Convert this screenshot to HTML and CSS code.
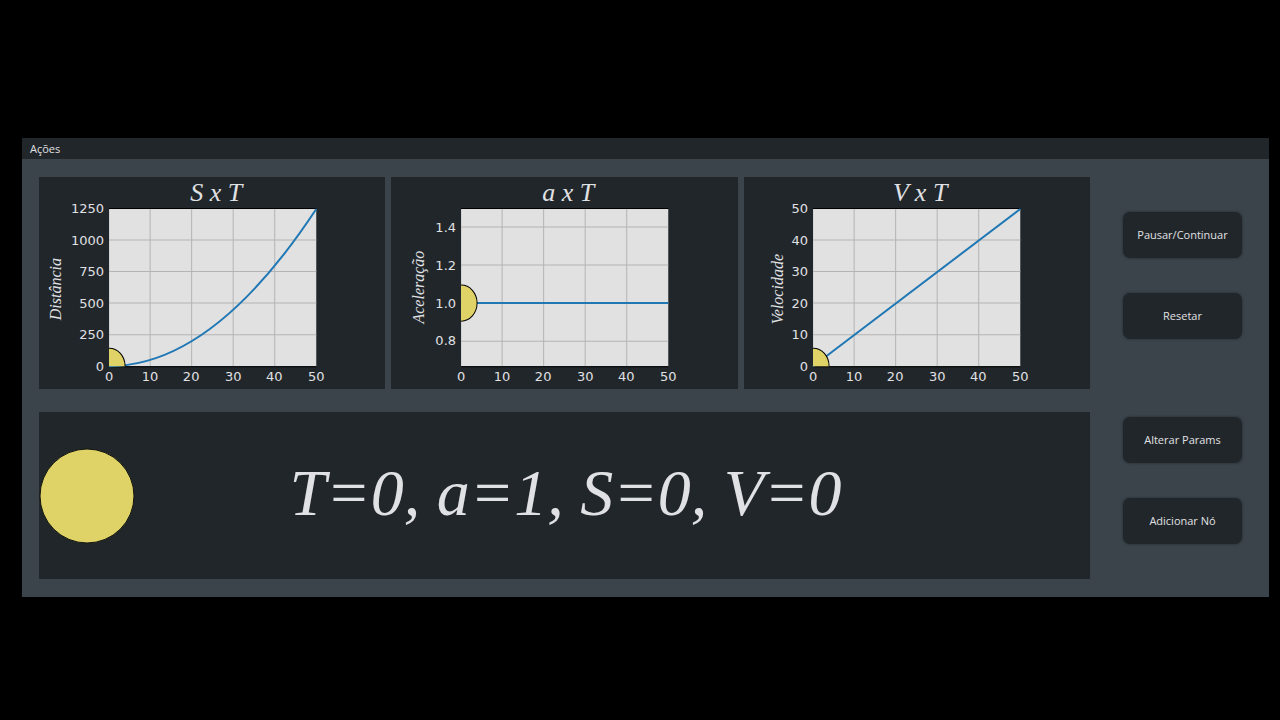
FILE: index.html
```html
<!DOCTYPE html>
<html lang="pt-BR">
<head>
<meta charset="utf-8">
<meta name="viewport" content="width=device-width, initial-scale=1">
<title>Ações</title>
<link rel="stylesheet" href="styles.css">
</head>
<body>
<div class="window">
  <nav class="menubar"><button class="menu" type="button">Ações</button></nav>
  <div class="content">
    <main class="panels">
      <section class="charts">
        <svg class="chart" viewBox="0 0 346 212" role="img" aria-label="S x T">
          <text class="chart-title" x="177" y="24">S x T</text>
          <text class="axis-title" transform="translate(22 112) rotate(-90)">Distância</text>
          <rect class="plot" x="70" y="32" width="207" height="157"/>
          <path class="grid" d="M111 32V189M152.500 32V189M194 32V189M235.500 32V189M70 63H277M70 94.500H277M70 126H277M70 157.500H277"/>
          <path class="frame" d="M70 31.500H277M70 189.500H277"/>
          <path class="line" d="M70 189Q173.500 189 277 32"/>
          <path class="marker" d="M70 171A16 18 0 0 1 86 189H70Z"/>
          <path class="marker-edge" d="M70 171A16 18 0 0 1 86 189"/>
          <g class="y-labels"><text x="65" y="36">1250</text><text x="65" y="68">1000</text><text x="65" y="99">750</text><text x="65" y="131">500</text><text x="65" y="162">250</text><text x="65" y="194">0</text></g>
          <g class="x-labels"><text x="70" y="204">0</text><text x="111" y="204">10</text><text x="152" y="204">20</text><text x="194" y="204">30</text><text x="235" y="204">40</text><text x="277" y="204">50</text></g>
        </svg>
        <svg class="chart" viewBox="0 0 346 212" role="img" aria-label="a x T">
          <text class="chart-title" x="177" y="24">a x T</text>
          <text class="axis-title" transform="translate(33 110) rotate(-90)">Aceleração</text>
          <rect class="plot" x="70" y="32" width="207" height="157"/>
          <path class="grid" d="M111 32V189M152.500 32V189M194 32V189M235.500 32V189M70 50H277M70 88H277M70 164H277"/>
          <path class="frame" d="M70 31.500H277M70 189.500H277"/>
          <path class="line" d="M70 126H277"/>
          <path class="marker" d="M70 108A16 18 0 0 1 70 144Z"/>
          <path class="marker-edge" d="M70 108A16 18 0 0 1 70 144"/>
          <g class="y-labels"><text x="65" y="55">1.4</text><text x="65" y="93">1.2</text><text x="65" y="131">1.0</text><text x="65" y="168">0.8</text></g>
          <g class="x-labels"><text x="70" y="204">0</text><text x="111" y="204">10</text><text x="152" y="204">20</text><text x="194" y="204">30</text><text x="235" y="204">40</text><text x="277" y="204">50</text></g>
        </svg>
        <svg class="chart" viewBox="0 0 346 212" role="img" aria-label="V x T">
          <text class="chart-title" x="176" y="24">V x T</text>
          <text class="axis-title" transform="translate(39 112) rotate(-90)">Velocidade</text>
          <rect class="plot" x="69" y="32" width="207" height="157"/>
          <path class="grid" d="M110 32V189M151.500 32V189M193 32V189M234.500 32V189M69 63H276M69 94.500H276M69 126H276M69 157.500H276"/>
          <path class="frame" d="M69 31.500H276M69 189.500H276"/>
          <path class="line" d="M69 189L276 32"/>
          <path class="marker" d="M69 171A16 18 0 0 1 85 189H69Z"/>
          <path class="marker-edge" d="M69 171A16 18 0 0 1 85 189"/>
          <g class="y-labels"><text x="64" y="36">50</text><text x="64" y="68">40</text><text x="64" y="99">30</text><text x="64" y="131">20</text><text x="64" y="162">10</text><text x="64" y="194">0</text></g>
          <g class="x-labels"><text x="69" y="204">0</text><text x="110" y="204">10</text><text x="151" y="204">20</text><text x="193" y="204">30</text><text x="234" y="204">40</text><text x="276" y="204">50</text></g>
        </svg>
      </section>
      <section class="scene">
        <svg class="ball" viewBox="0 0 96 96" aria-hidden="true"><circle cx="48" cy="48" r="47" fill="#dfd266" stroke="#11140f"/></svg>
        <p class="state">T=0, a=1, S=0, V=0</p>
      </section>
    </main>
    <aside class="actions">
      <div class="group">
        <button class="action" type="button">Pausar/Continuar</button>
        <button class="action" type="button">Resetar</button>
      </div>
      <div class="group">
        <button class="action" type="button">Alterar Params</button>
        <button class="action" type="button">Adicionar Nó</button>
      </div>
    </aside>
  </div>
</div>
</body>
</html>
```
FILE: styles.css
```css
* { box-sizing: border-box; }

body {
  margin: 0;
  min-height: 100vh;
  padding: 15px 11px 0 22px;
  display: flex;
  align-items: center;
  background: #000;
  color: #e0e1e4;
  font-family: "Open Sans", "Noto Sans", sans-serif;
  font-size: 11px;
}

button {
  font: inherit;
  color: inherit;
  border: 0;
}

.window {
  flex: 1;
  min-width: 0;
  background: #3a444a;
}

.menubar {
  display: flex;
  background: #21262a;
}

.menu {
  padding: 0 8px;
  line-height: 21px;
  background: transparent;
}

.content {
  display: flex;
  padding: 18px 27px 18px 17px;
  gap: 33px;
}

.panels {
  flex: 1;
  min-width: 0;
  display: flex;
  flex-direction: column;
  gap: 23px;
}

.charts {
  display: grid;
  grid-template-columns: repeat(3, minmax(0, 1fr));
  gap: 6px;
}

.chart {
  display: block;
  width: 100%;
  background: #21262a;
  fill: #e0e1e4;
}

.chart-title {
  font: italic 26px "Monotype Corsiva", "Liberation Serif", serif;
  text-anchor: middle;
}

.axis-title {
  font: italic 16px "Monotype Corsiva", "Liberation Serif", serif;
  text-anchor: middle;
}

.x-labels,
.y-labels {
  font: 13px "DejaVu Sans", sans-serif;
}

.x-labels { text-anchor: middle; }
.y-labels { text-anchor: end; }

.plot { fill: #e1e1e1; }

.grid,
.frame,
.line,
.marker-edge { fill: none; }

.grid { stroke: #b4b4b4; }
.frame { stroke: #000; }

.line {
  stroke: #1f77b4;
  stroke-width: 2px;
}

.marker { fill: #dfd266; }
.marker-edge { stroke: #000; }

.scene {
  display: flex;
  align-items: center;
  height: 167px;
  background: #21262a;
}

.ball {
  flex: none;
  width: 96px;
}

.state {
  flex: 1;
  margin: 0;
  padding: 0 94px 6px 0;
  text-align: center;
  font: italic 66px/80px "Monotype Corsiva", "Liberation Serif", serif;
}

.actions {
  display: flex;
  flex-direction: column;
  gap: 78px;
  padding-top: 35px;
}

.group {
  display: flex;
  flex-direction: column;
  gap: 35px;
}

.action {
  width: 119px;
  height: 46px;
  padding: 0;
  border-radius: 7px;
  background: #21262a;
  box-shadow: 0 0 2px 1px #2f383e;
}
```
